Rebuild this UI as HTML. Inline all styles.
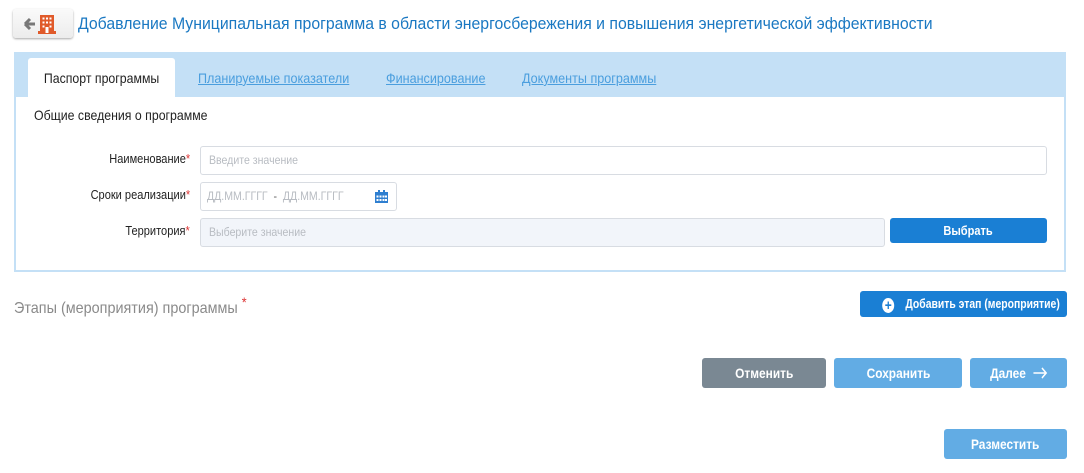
<!DOCTYPE html>
<html><head><meta charset="utf-8"><style>
*{box-sizing:border-box;margin:0;padding:0}
body{width:1084px;height:473px;background:#fff;font-family:"Liberation Sans",sans-serif;position:relative;overflow:hidden;color:#222}
.a{position:absolute}
.s{display:inline-block;white-space:nowrap;transform-origin:left center}
.c{display:inline-block;white-space:nowrap;transform-origin:center center}
.r{display:inline-block;white-space:nowrap;transform-origin:right center}
.hb{left:13px;top:9px;width:60px;height:29px;border-radius:3px;background:linear-gradient(#fafafa,#ececec);box-shadow:0 1px 2px rgba(0,0,0,.35)}
.title{left:78px;top:14px;font-size:17px;color:#1a78c2;white-space:nowrap}
.panel{left:14px;top:52px;width:1052px;height:220px;border:2px solid #c4e0f6;background:#fff}
.tabbar{left:14px;top:52px;width:1052px;height:45px;background:#c4e0f6}
.tab{left:28px;top:58px;width:147px;height:40px;background:#fff;border-radius:3px 3px 0 0;font-size:14px;text-align:center;line-height:40px}
.lnk{top:70px;font-size:14px;color:#4a9ede;white-space:nowrap}
.lnk span{text-decoration:underline}
.lbl{font-size:13px;text-align:right;width:180px;left:10px}
.st{color:#d33}
.inp{border:1px solid #d8dce2;border-radius:3px;background:#fff;font-size:12px;color:#b8bcc2;padding-left:8px;line-height:26px;white-space:nowrap}
.btn{border-radius:3px;color:#fff;font-size:14px;font-weight:bold;text-align:center;white-space:nowrap}
</style></head><body>
<div class="a hb"><svg width="60" height="29"><path d="M12 15h10M12 15l5-5M12 15l5 5" stroke="#777" stroke-width="3" fill="none"/><rect x="27" y="6" width="14" height="18" fill="#e05a2a"/><rect x="25" y="22" width="18" height="3" fill="#e05a2a"/><g fill="#fff"><rect x="29.5" y="8.5" width="2" height="2"/><rect x="33" y="8.5" width="2" height="2"/><rect x="36.5" y="8.5" width="2" height="2"/><rect x="29.5" y="12.5" width="2" height="2"/><rect x="33" y="12.5" width="2" height="2"/><rect x="36.5" y="12.5" width="2" height="2"/><rect x="29.5" y="16.5" width="2" height="2"/><rect x="36.5" y="16.5" width="2" height="2"/><rect x="32.5" y="18" width="3" height="6"/></g></svg></div>
<div class="a title"><span class="s" style="transform:scaleX(.93)">Добавление Муниципальная программа в области энергосбережения и повышения энергетической эффективности</span></div>
<div class="a panel"></div>
<div class="a tabbar"></div>
<div class="a tab"><span class="c" style="transform:scaleX(.88)">Паспорт программы</span></div>
<div class="a lnk" style="left:198px"><span class="s" style="transform:scaleX(.9)">Планируемые показатели</span></div>
<div class="a lnk" style="left:386px"><span class="s" style="transform:scaleX(.9)">Финансирование</span></div>
<div class="a lnk" style="left:522px"><span class="s" style="transform:scaleX(.9)">Документы программы</span></div>
<div class="a" style="left:34px;top:107px;font-size:14px"><span class="s" style="transform:scaleX(.88)">Общие сведения о программе</span></div>
<div class="a lbl" style="top:151px"><span class="r" style="transform:scaleX(.85)">Наименование<span class="st">*</span></span></div>
<div class="a inp" style="left:200px;top:146px;width:847px;height:29px"><span class="s" style="transform:scaleX(.88)">Введите значение</span></div>
<div class="a lbl" style="top:187px"><span class="r" style="transform:scaleX(.85)">Сроки реализации<span class="st">*</span></span></div>
<div class="a inp" style="left:200px;top:182px;width:197px;height:29px;padding-left:6px"><span class="s" style="transform:scaleX(.88)">ДД.ММ.ГГГГ &nbsp;<span style="color:#666">-</span>&nbsp; ДД.ММ.ГГГГ</span>
<svg class="a" style="left:174px;top:7px" width="13" height="13"><rect x="0" y="2" width="13" height="11" fill="#2f7fd0"/><rect x="3" y="0" width="2" height="3" fill="#2f7fd0"/><rect x="8" y="0" width="2" height="3" fill="#2f7fd0"/><g fill="#fff"><rect x="1.5" y="5.5" width="2" height="2"/><rect x="4.5" y="5.5" width="2" height="2"/><rect x="7.5" y="5.5" width="2" height="2"/><rect x="10" y="5.5" width="2" height="2"/><rect x="1.5" y="9" width="2" height="2"/><rect x="4.5" y="9" width="2" height="2"/><rect x="7.5" y="9" width="2" height="2"/><rect x="10" y="9" width="2" height="2"/></g></svg></div>
<div class="a lbl" style="top:223px"><span class="r" style="transform:scaleX(.85)">Территория<span class="st">*</span></span></div>
<div class="a inp" style="left:200px;top:218px;width:685px;height:29px;background:#f2f5fa"><span class="s" style="transform:scaleX(.88)">Выберите значение</span></div>
<div class="a btn" style="left:890px;top:218px;width:157px;height:25px;line-height:25px;background:#1a7fd4;font-size:13px"><span class="c" style="transform:scaleX(.85)">Выбрать</span></div>
<div class="a" style="left:14px;top:300px;font-size:16px;color:#8a8a8a"><span class="s" style="transform:scaleX(.9)">Этапы (мероприятия) программы <span class="st" style="position:relative;top:-6px;font-size:14px">*</span></span></div>
<div class="a btn" style="left:860px;top:291px;width:207px;height:26px;line-height:26px;background:#1a7fd4;font-size:13px"><span class="c" style="transform:scaleX(.8)"><span style="display:inline-block;width:15px;height:15px;border-radius:50%;background:#fff;color:#1a7fd4;line-height:15px;font-size:15px;vertical-align:-2px;margin-right:14px">+</span>Добавить этап (мероприятие)</span></div>
<div class="a btn" style="left:702px;top:358px;width:124px;height:30px;line-height:30px;background:#7a8893"><span class="c" style="transform:scaleX(.85)">Отменить</span></div>
<div class="a btn" style="left:834px;top:358px;width:128px;height:30px;line-height:30px;background:#62ace4"><span class="c" style="transform:scaleX(.85)">Сохранить</span></div>
<div class="a btn" style="left:970px;top:358px;width:97px;height:30px;line-height:30px;background:#62ace4"><span class="c" style="transform:scaleX(.85)">Далее <svg width="18" height="12" style="vertical-align:-1px;margin-left:4px"><path d="M1 6h15M11 1l5 5-5 5" stroke="#fff" stroke-width="1.6" fill="none"/></svg></span></div>
<div class="a btn" style="left:944px;top:429px;width:123px;height:30px;line-height:30px;background:#62ace4"><span class="c" style="transform:scaleX(.85)">Разместить</span></div>
</body></html>
